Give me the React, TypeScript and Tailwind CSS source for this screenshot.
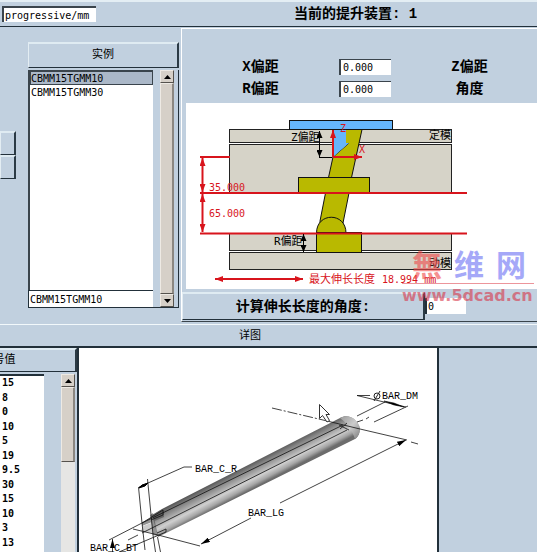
import { ReactNode } from "react";
import clsx from "clsx";

const instances = ["CBMM15TGMM10", "CBMM15TGMM30"];

const barValues = ["15", "8", "0", "10", "5", "19", "9.5", "30", "15", "10", "3", "13"];

const offsets = [
  { id: "x-offset", label: "X偏距", value: "0.000", next: "Z偏距" },
  { id: "r-offset", label: "R偏距", value: "0.000", next: "角度" },
];

function Raised({ className, children }: { className?: string; children?: ReactNode }) {
  return (
    <button
      type="button"
      className={clsx(
        "block border-t-2 border-r-2 border-b border-l border-t-[#dfebf2] border-l-[#e3edf3] border-r-[#2b3a45] border-b-[#22303a] bg-[#c1d0df] text-center",
        className
      )}
    >
      {children}
    </button>
  );
}

function ScrollBar({ thumb, track, end }: { thumb: string; track: string; end?: boolean }) {
  const arrow =
    "flex h-[13px] shrink-0 items-center justify-center border border-t-[#eeeae4] border-l-[#eeeae4] border-r-[#55524d] border-b-[#55524d] bg-[#d6d0c8]";

  return (
    <div className={clsx("flex w-[14px] shrink-0 flex-col", track)}>
      <button type="button" aria-label="Scroll up" className={arrow}>
        <svg width="7" height="4" viewBox="0 0 7 4">
          <path d="M0 4 3.5 0 7 4z" />
        </svg>
      </button>
      <div
        className={clsx(
          "border border-r-2 border-t-[#eeeae4] border-l-[#eeeae4] border-r-[#8b8781] border-b-[#55524d] bg-[#d6d0c8]",
          thumb
        )}
      />
      {end && (
        <button type="button" aria-label="Scroll down" className={arrow}>
          <svg width="7" height="4" viewBox="0 0 7 4">
            <path d="M0 0h7L3.5 4z" />
          </svg>
        </button>
      )}
    </div>
  );
}

function MouldDiagram() {
  return (
    <svg
      width="351"
      height="186"
      viewBox="0 0 351 186"
      className="block shrink-0 font-['DejaVu_Sans_Mono','Noto_Sans_CJK_SC',monospace] text-[10px]"
    >
      <defs>
        <marker id="red" viewBox="0 0 8 6" markerWidth="8" markerHeight="6" refX="8" refY="3" orient="auto-start-reverse" markerUnits="userSpaceOnUse">
          <path d="M0 0 8 3 0 6z" fill="#d8141c" />
        </marker>
        <marker id="black" viewBox="0 0 7 6" markerWidth="7" markerHeight="6" refX="7" refY="3" orient="auto-start-reverse" markerUnits="userSpaceOnUse">
          <path d="M0 0 7 3 0 6z" fill="#000" />
        </marker>
      </defs>

      {/* Plates */}
      <g fill="#d6d3c8" stroke="#222" shapeRendering="crispEdges">
        <rect x="43.5" y="26.5" width="222" height="13" />
        <rect x="43.5" y="41.5" width="222" height="48" />
        <rect x="43.5" y="130.5" width="222" height="17" />
        <rect x="43.5" y="149.5" width="222" height="17" />
      </g>

      {/* Lifter */}
      <rect x="103.5" y="17.5" width="103" height="9" fill="#66b5fb" stroke="#111" />
      <path d="M159.5 26.5H176L165.5 74.5h-23L147 54l15.5-13.5h-3z" fill="#b9b900" stroke="#111" />
      <path d="M147 27h13v13h3L147 54z" fill="#66b5fb" />
      <path d="M139.5 90 134 118v12h24l-1-10 6-30z" fill="#b9b900" stroke="#111" />
      <path d="M130.5 130c0-21 29.500-21 29.500 0z" fill="#b9b900" stroke="#111" />
      <rect x="112.5" y="74.5" width="71" height="15" fill="#b9b900" stroke="#111" />
      <rect x="130.5" y="129.5" width="45" height="20" fill="#b9b900" stroke="#111" />

      {/* Red dimensions */}
      <g stroke="#d8141c" strokeWidth="2" fill="none">
        <path d="M14 54h30M14 90h267M14 130.5h267" />
        <path d="M16.5 55v34" markerStart="url(#red)" markerEnd="url(#red)" />
        <path d="M16.5 91v38" markerStart="url(#red)" markerEnd="url(#red)" />
        <path d="M29 176h88" markerStart="url(#red)" markerEnd="url(#red)" />
        <path d="M147 54V27" markerEnd="url(#red)" />
        <path d="M147 54h29" markerEnd="url(#red)" />
      </g>
      <g stroke="#000" fill="none">
        <path d="M133.5 28v26" markerStart="url(#black)" markerEnd="url(#black)" />
        <path d="M133 54.5h13" />
        <path d="M117.5 131v18" markerStart="url(#black)" markerEnd="url(#black)" />
      </g>

      <g fill="#d8141c">
        <text x="154" y="29">Z</text>
        <text x="173" y="50">X</text>
        <text x="23" y="88">35.000</text>
        <text x="23" y="114">65.000</text>
        <text x="123" y="180" className="text-[11px]">最大伸长长度</text>
        <text x="196" y="180">18.994 mm</text>
      </g>
      <g className="text-[11px]">
        <text x="105" y="38">Z偏距</text>
        <text x="88" y="142">R偏距</text>
        <text x="243" y="36">定模</text>
        <text x="243" y="164">动模</text>
      </g>
    </svg>
  );
}

function BarDrawing() {
  return (
    <svg
      width="357"
      height="203"
      viewBox="0 0 357 203"
      className="block shrink-0 font-['Liberation_Mono',monospace] text-[10px]"
    >
      <defs>
        <linearGradient id="tube" gradientUnits="userSpaceOnUse" x1="100" y1="151" x2="111" y2="172">
          <stop offset="0" stopColor="#565656" />
          <stop offset="0.2" stopColor="#808080" />
          <stop offset="0.65" stopColor="#cfcfcf" />
          <stop offset="0.85" stopColor="#a6a6a6" />
          <stop offset="1" stopColor="#6c6c6c" />
        </linearGradient>
        <linearGradient id="cap" x1="0" y1="0" x2="1" y2="1">
          <stop offset="0" stopColor="#9a9a9a" />
          <stop offset="0.5" stopColor="#cccccc" />
          <stop offset="1" stopColor="#7c7c7c" />
        </linearGradient>
        <marker id="tip" viewBox="0 0 9 5" markerWidth="9" markerHeight="5" refX="9" refY="2.5" orient="auto-start-reverse" markerUnits="userSpaceOnUse">
          <path d="M0 0 9 2.5 0 5z" />
        </marker>
      </defs>

      {/* Bar body */}
      <path d="M72 166 82 160 260 69c9-5 18 2 20 10 0 5-2 9-5 11L78 188z" fill="url(#tube)" />
      <path d="M260 69c9-5 18 2 20 10 0 5-2 9-5 11-3-9-7-15-15-21z" fill="url(#cap)" />
      <path d="M62 174 80 163l4-1v6l-12 5-10 4zM70 166l3-2 5 23-5-1z" fill="#4a4a4a" fillOpacity="0.6" />
      <path d="M63 177l8-3 2 10-12-2z" fill="#ccc" />

      <g stroke="#111" strokeWidth="0.8" fill="none">
        <path d="M62 174 263 76M48 191l10-5M62 184 267 81" />
        <path d="M29 191 62 174l21-13v5l-12 5M39 203l47-20v-3l-9 4" />
        <path d="M53 180l25 6 42 11" />
        <path d="M58.5 138 62 174l3 27M67.5 130 73 186l2.5 17M77.5 188l3 15" />
        <path d="M59 138l45-20h8" />
        <path d="M192 59l51 12" strokeDasharray="10 2 2 2" />
        <path d="M243 71l37 9 47 11M331 93l7 2" />
        <path d="M259 76l10 5M260 80l7-6" />
        <path d="M171 169l-50 26" markerEnd="url(#tip)" />
        <path d="M200 154 326 91" markerEnd="url(#tip)" />
        <path d="M290 46.5h-13l27 6.5 22 5" />
        <path d="M277 67l28-14M277 73l6-2M286 70l3-2M294 73l34-16" />
        <path d="M32.5 190v13" markerStart="url(#tip)" />
      </g>
      <path d="M304 52l10 2 10 4-10-2z" stroke="#000" strokeWidth="0.5" />
      <path d="M59 139l3-3 6-2-3 3z" stroke="#000" />

      <g stroke="#222" fill="none">
        <circle cx="297" cy="47" r="3" />
        <path d="M294 52l6-10" />
      </g>
      <text x="302" y="50">BAR_DM</text>
      <text x="115" y="123">BAR_C_R</text>
      <text x="168" y="167">BAR_LG</text>
      <text x="10" y="202">BAR_C_BT</text>

      {/* Pointer */}
      <path d="M239.5 55.5v14l3-3 4.500 6.500 2.500-1.500-3.500-6h3.500z" fill="#fff" stroke="#333" />
    </svg>
  );
}

export default function App() {
  return (
    <div className="flex min-h-screen flex-col overflow-hidden bg-[#c1d0df] font-['DejaVu_Sans_Mono','Noto_Sans_CJK_SC',monospace] text-[10px] text-black">
      {/* Title row */}
      <header className="flex h-[27px] items-center border-t-2 border-b border-t-[#e4eef4] border-b-[#22303a]">
        <input
          aria-label="Catalog"
          defaultValue="progressive/mm"
          className="ml-0.5 h-4 w-[94px] border-t-2 border-l-2 border-[#3a444c] bg-white pl-px outline-none"
        />
        <h1 className="ml-[198px] whitespace-nowrap font-['Liberation_Mono','Noto_Sans_CJK_SC',monospace] text-[14px] leading-5 font-bold">
          当前的提升装置: 1
        </h1>
      </header>

      <main className="flex h-[297px] shrink-0">
        <div className="w-4 shrink-0 pt-[104px]">
          <Raised className="h-6 w-full" />
          <Raised className="h-6 w-full" />
        </div>

        {/* Instances */}
        <section className="ml-3 w-[151px] shrink-0 pt-[15px]">
          <Raised className="h-[26px] w-full text-[11px]">实例</Raised>
          <div className="mt-0.5 flex h-[238px] border-r border-b border-[#22303a]">
            <div className="flex w-[125px] flex-col">
              <ul role="listbox" aria-label="实例" className="flex-1 border-t border-l-2 border-[#3a444c] bg-white leading-[13px]">
                {instances.map((name, index) => (
                  <li
                    key={name}
                    role="option"
                    aria-selected={index === 0}
                    className={clsx(
                      "h-[14px] border",
                      index === 0 ? "border-[#3a444c] bg-[#abb8c8]" : "border-transparent"
                    )}
                  >
                    {name}
                  </li>
                ))}
              </ul>
              <input
                aria-label="Selected"
                defaultValue={instances[0]}
                className="h-[17px] w-full border-t border-l border-[#22303a] bg-white pl-px outline-none"
              />
            </div>
            <div className="ml-[7px] flex">
              <ScrollBar thumb="flex-1" track="bg-[#d6d0c8]" end />
            </div>
          </div>
        </section>

        {/* Parameters */}
        <section className="relative mt-px mb-0.5 ml-0.5 flex min-w-0 flex-1 flex-col border-t border-b border-l border-t-white border-b-[#3a444c] border-l-white pt-[27px]">
          {offsets.map((row) => (
            <div
              key={row.id}
              className="grid h-[22px] grid-cols-[157px_52px_157px] items-center text-center font-['Liberation_Mono','Noto_Sans_CJK_SC',monospace] text-[14px] leading-[22px] font-bold"
            >
              <label htmlFor={row.id}>{row.label}</label>
              <input
                id={row.id}
                defaultValue={row.value}
                className="h-4 w-full border-t border-l-2 border-[#3a444c] bg-white pl-0.5 font-['DejaVu_Sans_Mono',monospace] text-[10px] font-normal outline-none"
              />
              <span>{row.next}</span>
            </div>
          ))}

          <div className="mt-[3px] ml-1 overflow-hidden bg-white">
            <MouldDiagram />
          </div>

          <div className="mt-[3px] flex items-center">
            <Raised className="h-7 w-[243px] font-['Liberation_Mono','Noto_Sans_CJK_SC',monospace] text-[14px] leading-6 font-bold">
              计算伸长长度的角度:
            </Raised>
            <input
              aria-label="角度"
              defaultValue="0"
              className="h-4 w-[41px] border-l-2 border-[#22303a] bg-white pl-px outline-none"
            />
          </div>

          {/* Watermark */}
          <div className="pointer-events-none absolute top-[218px] left-[220px] w-[132px] opacity-60">
            <div className="flex gap-3 border-b border-[#e0505a] pb-1 pl-2.5 font-['Noto_Sans_CJK_SC',sans-serif] text-[30px] leading-8 font-bold text-[#6a70f4]">
              <span className="text-[#f04848]">無</span>
              <span>维</span>
              <span>网</span>
            </div>
            <p className="font-['DejaVu_Sans',sans-serif] text-[16px] leading-6 font-bold text-[#d8384a]">
              www.5dcad.cn
            </p>
          </div>
        </section>
      </main>

      {/* Detail */}
      <h2 className="h-6 shrink-0 border-t border-b-2 border-t-[#f2f8fb] border-b-[#22303a] pl-[239px] text-[11px] leading-[22px]">
        详图
      </h2>
      <section className="flex flex-1">
        <div className="flex w-[77px] shrink-0 flex-col overflow-hidden">
          <Raised className="-ml-[67px] h-6 w-36 shrink-0 text-[11px]">号值</Raised>
          <div className="mt-0.5 flex flex-1">
            <ul className="flex w-11 flex-col border-t-2 border-[#22303a] bg-white pb-0.5 pl-0.5 font-bold">
              {barValues.map((value, index) => (
                <li key={index} className="flex flex-1 items-center leading-[14px]">
                  {value}
                </li>
              ))}
            </ul>
            <div className="ml-[17px] flex">
              <ScrollBar thumb="h-[75px]" track="bg-[#e6e6e4]" />
            </div>
          </div>
        </div>
        <div className="w-[362px] shrink-0 border-r-2 border-l-2 border-[#22303a] bg-white pt-px pl-px">
          <BarDrawing />
        </div>
      </section>
    </div>
  );
}
